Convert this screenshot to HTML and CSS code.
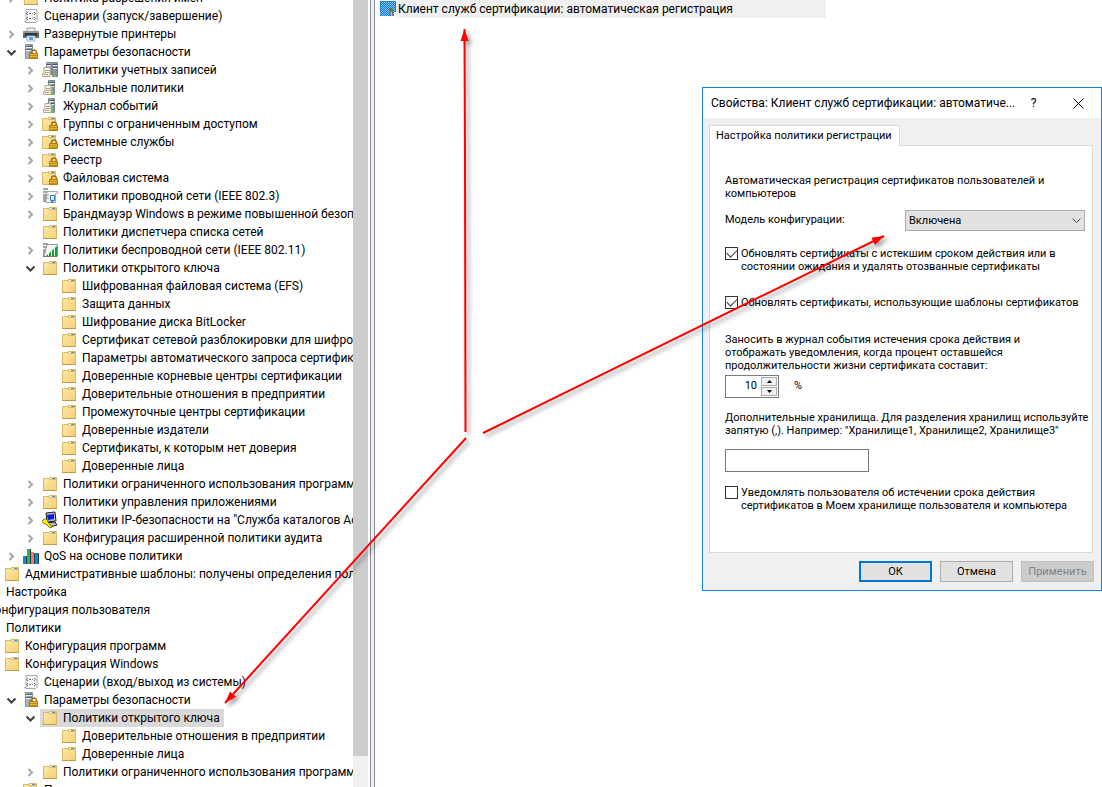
FILE: index.html
```
<!DOCTYPE html>
<html lang="ru">
<head>
<meta charset="utf-8">
<title>Редактор управления групповыми политиками</title>
<link rel="stylesheet" href="styles.css">
</head>
<body>
<svg class="sprite" aria-hidden="true">
  <defs>
    <linearGradient id="gold" x1="0" y1="0" x2="1" y2="1"><stop offset="0" stop-color="#ffe9a6"/><stop offset="1" stop-color="#f3cf74"/></linearGradient>
    <linearGradient id="steel" x1="0" y1="0" x2="1" y2="0"><stop offset="0" stop-color="#b9c6cf"/><stop offset="1" stop-color="#75868f"/></linearGradient>
    <pattern id="check" width="2" height="2" patternUnits="userSpaceOnUse"><path fill="#0078d7" d="M0 0h1v1H0zM1 1h1v1H1z"/></pattern>
    <marker id="head" viewBox="0 0 12 10" refX="12" refY="5" markerWidth="12" markerHeight="10" markerUnits="userSpaceOnUse" orient="auto"><path fill="#f00" d="M0 1l12 4-12 4z"/></marker>
  </defs>
  <symbol id="closed" viewBox="0 0 15 18"><path d="M5.500 6l3.500 3.500L5.500 13" fill="none" stroke="#a6a6a6" stroke-width="2"/></symbol>
  <symbol id="open" viewBox="0 0 15 18"><path d="M3.500 7.500L7.500 11.500l4-4" fill="none" stroke="#404040" stroke-width="2"/></symbol>
  <symbol id="folder" viewBox="0 0 18 18"><path d="M2.500 15.500v-12h5l1-1h7v13z" fill="url(#gold)" stroke="#dcb765"/><path d="M8.500 4.500v-2h6v2z" fill="#fff" stroke="#d9b763"/><path d="M11 3h3v1h-3z" fill="#3b9ae8"/><path d="M2 15h14v1H2z" fill="#c39a4a"/></symbol>
  <symbol id="lock" viewBox="0 0 18 18"><path d="M10.500 11V9.500a2.500 2.500 0 0 1 5 0V11" fill="none" stroke="#9c7414" stroke-width="1.500"/><path d="M8.500 10.500h8v5h-8z" fill="#e8b52c" stroke="#b08016"/><path d="M9 12.500h7M9 14.500h7" stroke="#c28d16"/></symbol>
  <symbol id="lockfolder" viewBox="0 0 18 18"><path d="M1.500 15.500v-12h5l1-1h7v13z" fill="url(#gold)" stroke="#dcb765"/><path d="M7.500 4.500v-2h6v2z" fill="#fff" stroke="#d9b763"/><path d="M10 3h3v1h-3z" fill="#3b9ae8"/><use href="#lock" x="0" y="0" width="18" height="18"/></symbol>
  <symbol id="script" viewBox="0 0 18 18"><path d="M4 2.500h11v12l-1 1H3.500l-1-1H4z" fill="#f7f7f7" stroke="#a9a9a9"/><path d="M6 5L4.500 6.500 6 8M12 5l1.500 1.500L12 8M6 10l-1.500 1.500L6 13M12 10l1.500 1.500L12 13" fill="none" stroke="#666"/><path d="M7 6.500h4M7 11.500h4" stroke="#777" stroke-dasharray="2 1"/></symbol>
  <symbol id="printer" viewBox="0 0 18 18"><path d="M5 3h8v5H5z" fill="#e9eef1" stroke="#9aa4aa"/><path d="M1 6h16v7H1z" fill="#606a70"/><path d="M1 6h16v2H1z" fill="#8e989e"/><path d="M3 8h12v3H3z" fill="#30363a"/><path d="M5 11h8v5H5z" fill="#f5fbff" stroke="#9eb3bf"/><path d="M7 12h4v3H7z" fill="#4aa5dc"/></symbol>
  <symbol id="security" viewBox="0 0 18 18"><path d="M3.500 1.500h7v14h-7z" fill="url(#steel)" stroke="#82919a"/><path d="M4 4.500h6M4 7.500h6" stroke="#f4f7f8"/><path d="M4 3.500h6M4 6.500h6" stroke="#4e626e"/><use href="#lock" x="-1" y="0" width="18" height="18"/></symbol>
  <symbol id="server" viewBox="0 0 18 18"><path d="M7.500 1.500h6v14h-6z" fill="url(#steel)" stroke="#788890"/><path d="M8 4.500h5M8 7.500h5" stroke="#edf2f4"/><path d="M8 3.500h5M8 6.500h5" stroke="#44545d"/><path d="M11 14h2v2h-2z" fill="#54d62c"/><path d="M4 6.500h6v9H2.500v-3H4z" fill="#faf4df" stroke="#b7a77e"/><path d="M5 9.500h4M5 11.500h4M4 13.500h4" stroke="#a5a5a0"/></symbol>
  <symbol id="servers" viewBox="0 0 18 18"><path d="M5.500 1.500h5v12h-5zM11.500 1.500h5v14h-5z" fill="url(#steel)" stroke="#788890"/><path d="M6 4.500h4M12 4.500h4M12 7.500h4" stroke="#edf2f4"/><path d="M6 3.500h4M12 3.500h4M12 6.500h4" stroke="#44545d"/><path d="M13 14h2v2h-2z" fill="#54d62c"/><path d="M3 6.500h6v9H1.500v-3H3z" fill="#faf4df" stroke="#b7a77e"/><path d="M4 9.500h4M4 11.500h4M3 13.500h4" stroke="#a5a5a0"/></symbol>
  <symbol id="wired" viewBox="0 0 18 18"><path d="M2 1h5v14H2z" fill="#98a7af"/><path d="M2 3.500h5M2 6.500h5" stroke="#fff"/><path d="M6 4.500h10.500v2h-2v9H5z" fill="#f7f8f8" stroke="#a0a8aa"/><path d="M4 8h4M4 11h4" stroke="#a99b7a"/><path d="M9.500 8.500h4v5h-4z" fill="#d5efff" stroke="#357cae"/><path d="M11.500 13v3" stroke="#357cae" stroke-width="2"/></symbol>
  <symbol id="wireless" viewBox="0 0 18 18"><path d="M2 2h5v13H2z" fill="#98a7af"/><path d="M2 4.500h5M2 7.500h5" stroke="#fff"/><path d="M6 3.500h10.500v12H3z" fill="#f7f8f8" stroke="#999"/><path d="M5 15h11V5z" fill="#169a35"/><path d="M7.500 5v10M10.500 5v10M13.500 5v10" stroke="#e9f6ec"/><path d="M2 15.500h14" stroke="#877a5c"/></symbol>
  <symbol id="ipsec" viewBox="0 0 18 18"><path d="M5 2l9-1 1 9-9 1zM5 12l9-1 2 3-7 2z" fill="#b9bcc0" stroke="#222"/><path d="M6 4l7-1v5l-6 1z" fill="#1019e8"/><path d="M2 9c2-2 5-1 5 2l4 5-2 1-4-4c-3 0-4-2-3-4z" fill="#fff000" stroke="#524f00" stroke-width=".8"/></symbol>
  <symbol id="qos" viewBox="0 0 18 18"><path d="M1 9h4v8H1z" fill="#1688d2"/><path d="M5 2h4v15H5z" fill="#3aaf4c"/><path d="M9 5h3v12H9z" fill="#ef7d62"/><path d="M13 6h4v11h-4z" fill="#1386cf"/><path d="M4.500 9v8M8.500 2v15M12.500 6v11M16.500 6v11" stroke="#1a4051"/></symbol>
  <symbol id="cert" viewBox="0 0 16 16"><path d="M0 0h16v11h-2v4H0z" fill="#8fc6f5"/><path d="M0 0h16v11H0zM0 11h9v4H0z" fill="url(#check)"/><path d="M.500 11V.500h15V11" fill="none" stroke="#2585cf"/><circle cx="11" cy="9" r="2" fill="#806e24"/><path d="M10 11v4M13 11v4" stroke="#173b59"/></symbol>
</svg>

<div class="console">
  <nav class="tree-pane" aria-label="Дерево консоли">
    <ul class="tree">
      <li><ul><li><ul><li><ul>
        <li><div class="node"><svg class="arrow"><use href="#closed"/></svg><svg class="icon"><use href="#folder"/></svg><span>Политика разрешения имен</span></div></li>
        <li><div class="node"><i class="arrow"></i><svg class="icon"><use href="#script"/></svg><span>Сценарии (запуск/завершение)</span></div></li>
        <li><div class="node"><svg class="arrow"><use href="#closed"/></svg><svg class="icon"><use href="#printer"/></svg><span>Развернутые принтеры</span></div></li>
        <li><div class="node"><svg class="arrow"><use href="#open"/></svg><svg class="icon"><use href="#security"/></svg><span>Параметры безопасности</span></div>
          <ul>
            <li><div class="node"><svg class="arrow"><use href="#closed"/></svg><svg class="icon"><use href="#servers"/></svg><span>Политики учетных записей</span></div></li>
            <li><div class="node"><svg class="arrow"><use href="#closed"/></svg><svg class="icon"><use href="#server"/></svg><span>Локальные политики</span></div></li>
            <li><div class="node"><svg class="arrow"><use href="#closed"/></svg><svg class="icon"><use href="#server"/></svg><span>Журнал событий</span></div></li>
            <li><div class="node"><svg class="arrow"><use href="#closed"/></svg><svg class="icon"><use href="#lockfolder"/></svg><span>Группы с ограниченным доступом</span></div></li>
            <li><div class="node"><svg class="arrow"><use href="#closed"/></svg><svg class="icon"><use href="#lockfolder"/></svg><span>Системные службы</span></div></li>
            <li><div class="node"><svg class="arrow"><use href="#closed"/></svg><svg class="icon"><use href="#lockfolder"/></svg><span>Реестр</span></div></li>
            <li><div class="node"><svg class="arrow"><use href="#closed"/></svg><svg class="icon"><use href="#lockfolder"/></svg><span>Файловая система</span></div></li>
            <li><div class="node"><svg class="arrow"><use href="#closed"/></svg><svg class="icon"><use href="#wired"/></svg><span>Политики проводной сети (IEEE 802.3)</span></div></li>
            <li><div class="node"><svg class="arrow"><use href="#closed"/></svg><svg class="icon"><use href="#folder"/></svg><span>Брандмауэр Windows в режиме повышенной безопасности</span></div></li>
            <li><div class="node"><i class="arrow"></i><svg class="icon"><use href="#folder"/></svg><span>Политики диспетчера списка сетей</span></div></li>
            <li><div class="node"><svg class="arrow"><use href="#closed"/></svg><svg class="icon"><use href="#wireless"/></svg><span>Политики беспроводной сети (IEEE 802.11)</span></div></li>
            <li><div class="node"><svg class="arrow"><use href="#open"/></svg><svg class="icon"><use href="#folder"/></svg><span>Политики открытого ключа</span></div>
              <ul>
                <li><div class="node"><i class="arrow"></i><svg class="icon"><use href="#folder"/></svg><span>Шифрованная файловая система (EFS)</span></div></li>
                <li><div class="node"><i class="arrow"></i><svg class="icon"><use href="#folder"/></svg><span>Защита данных</span></div></li>
                <li><div class="node"><i class="arrow"></i><svg class="icon"><use href="#folder"/></svg><span>Шифрование диска BitLocker</span></div></li>
                <li><div class="node"><i class="arrow"></i><svg class="icon"><use href="#folder"/></svg><span>Сертификат сетевой разблокировки для шифрования</span></div></li>
                <li><div class="node"><i class="arrow"></i><svg class="icon"><use href="#folder"/></svg><span>Параметры автоматического запроса сертификатов</span></div></li>
                <li><div class="node"><i class="arrow"></i><svg class="icon"><use href="#folder"/></svg><span>Доверенные корневые центры сертификации</span></div></li>
                <li><div class="node"><i class="arrow"></i><svg class="icon"><use href="#folder"/></svg><span>Доверительные отношения в предприятии</span></div></li>
                <li><div class="node"><i class="arrow"></i><svg class="icon"><use href="#folder"/></svg><span>Промежуточные центры сертификации</span></div></li>
                <li><div class="node"><i class="arrow"></i><svg class="icon"><use href="#folder"/></svg><span>Доверенные издатели</span></div></li>
                <li><div class="node"><i class="arrow"></i><svg class="icon"><use href="#folder"/></svg><span>Сертификаты, к которым нет доверия</span></div></li>
                <li><div class="node"><i class="arrow"></i><svg class="icon"><use href="#folder"/></svg><span>Доверенные лица</span></div></li>
              </ul></li>
            <li><div class="node"><svg class="arrow"><use href="#closed"/></svg><svg class="icon"><use href="#folder"/></svg><span>Политики ограниченного использования программ</span></div></li>
            <li><div class="node"><svg class="arrow"><use href="#closed"/></svg><svg class="icon"><use href="#folder"/></svg><span>Политики управления приложениями</span></div></li>
            <li><div class="node"><svg class="arrow"><use href="#closed"/></svg><svg class="icon"><use href="#ipsec"/></svg><span>Политики IP-безопасности на "Служба каталогов Active Directory"</span></div></li>
            <li><div class="node"><svg class="arrow"><use href="#closed"/></svg><svg class="icon"><use href="#folder"/></svg><span>Конфигурация расширенной политики аудита</span></div></li>
          </ul></li>
        <li><div class="node"><svg class="arrow"><use href="#closed"/></svg><svg class="icon"><use href="#qos"/></svg><span>QoS на основе политики</span></div></li>
        </ul></li>
        <li><div class="node"><i class="arrow"></i><svg class="icon"><use href="#folder"/></svg><span>Административные шаблоны: получены определения политик</span></div></li>
        </ul></li>
        <li><div class="node"><i class="arrow"></i><i class="icon"></i><span>Настройка</span></div></li>
      </ul></li>
      <li><div class="node"><i class="arrow"></i><i class="icon"></i><span>Конфигурация пользователя</span></div>
        <ul>
          <li><div class="node"><i class="arrow"></i><i class="icon"></i><span>Политики</span></div>
            <ul>
              <li><div class="node"><i class="arrow"></i><svg class="icon"><use href="#folder"/></svg><span>Конфигурация программ</span></div></li>
              <li><div class="node"><i class="arrow"></i><svg class="icon"><use href="#folder"/></svg><span>Конфигурация Windows</span></div>
                <ul>
                  <li><div class="node"><i class="arrow"></i><svg class="icon"><use href="#script"/></svg><span>Сценарии (вход/выход из системы)</span></div></li>
                  <li><div class="node"><svg class="arrow"><use href="#open"/></svg><svg class="icon"><use href="#security"/></svg><span>Параметры безопасности</span></div>
                    <ul>
                      <li><div class="node"><svg class="arrow"><use href="#open"/></svg><div class="selected"><svg class="icon"><use href="#folder"/></svg><span>Политики открытого ключа</span></div></div>
                        <ul>
                          <li><div class="node"><i class="arrow"></i><svg class="icon"><use href="#folder"/></svg><span>Доверительные отношения в предприятии</span></div></li>
                          <li><div class="node"><i class="arrow"></i><svg class="icon"><use href="#folder"/></svg><span>Доверенные лица</span></div></li>
                        </ul></li>
                      <li><div class="node"><svg class="arrow"><use href="#closed"/></svg><svg class="icon"><use href="#folder"/></svg><span>Политики ограниченного использования программ</span></div></li>
                    </ul></li>
                  <li><div class="node"><i class="arrow"></i><svg class="icon"><use href="#lockfolder"/></svg><span>Перенаправление папки</span></div></li>
                </ul></li>
            </ul></li>
        </ul></li>
    </ul>
  </nav>
  <div class="scrollbar"><div class="thumb"></div></div>
  <div class="splitter"></div>
  <main class="details">
    <div class="entry"><svg class="cert"><use href="#cert"/></svg><span>Клиент служб сертификации: автоматическая регистрация</span></div>
  </main>
</div>

<section class="dialog" role="dialog" aria-labelledby="dialog-title">
  <header class="titlebar">
    <h1 id="dialog-title">Свойства: Клиент служб сертификации: автоматиче...</h1>
    <button class="caption" type="button" aria-label="Справка">?</button>
    <button class="caption" type="button" aria-label="Закрыть"><svg width="11" height="11" viewBox="0 0 11 11"><path d="M.500.500l10 10M10.500.500l-10 10" stroke="#000"/></svg></button>
  </header>
  <form class="body">
    <button class="tab" type="button">Настройка политики регистрации</button>
    <div class="sheet">
      <p>Автоматическая регистрация сертификатов пользователей и<br>компьютеров</p>
      <div class="model">
        <label for="model">Модель конфигурации:</label>
        <div class="combo"><select id="model"><option>Включена</option></select><svg width="9" height="6" viewBox="0 0 9 6"><path d="M.500.500l4 4 4-4" fill="none" stroke="#444"/></svg></div>
      </div>
      <div class="option"><input id="renew" type="checkbox" checked><label for="renew">Обновлять сертификаты с истекшим сроком действия или в<br>состоянии ожидания и удалять отозванные сертификаты</label></div>
      <div class="option templates"><input id="templates" type="checkbox" checked><label for="templates">Обновлять сертификаты, использующие шаблоны сертификатов</label></div>
      <label class="block" for="percent">Заносить в журнал события истечения срока действия и<br>отображать уведомления, когда процент оставшейся<br>продолжительности жизни сертификата составит:</label>
      <div class="percent">
        <div class="spin"><input id="percent" type="text" value="10"><div class="steps"><button type="button" aria-label="Больше"><svg width="5" height="3"><path d="M0 3h5L2.500 0z"/></svg></button><button type="button" aria-label="Меньше"><svg width="5" height="3"><path d="M0 0h5L2.500 3z"/></svg></button></div></div>
        <span>%</span>
      </div>
      <label class="block" for="stores">Дополнительные хранилища. Для разделения хранилищ используйте<br>запятую (,). Например: "Хранилище1, Хранилище2, Хранилище3"</label>
      <input class="stores" id="stores" type="text">
      <div class="option"><input id="notify" type="checkbox"><label for="notify">Уведомлять пользователя об истечении срока действия<br>сертификатов в Моем хранилище пользователя и компьютера</label></div>
    </div>
    <footer class="actions">
      <button class="default" type="button">ОК</button>
      <button type="button">Отмена</button>
      <button type="button" disabled>Применить</button>
    </footer>
  </form>
</section>

<svg class="callouts" width="1102" height="787" aria-hidden="true">
  <g fill="none" stroke="#f00" stroke-width="2">
    <path d="M465.500 432L465 160 464.500 29" marker-end="url(#head)"/>
    <path d="M483 433L884 236" marker-end="url(#head)"/>
    <path d="M466 438L225 703" marker-end="url(#head)"/>
  </g>
</svg>
</body>
</html>
```

FILE: styles.css
```
* { box-sizing: border-box; }

body {
  margin: 0;
  height: 100vh;
  overflow: hidden;
  position: relative;
  background: #fff;
  color: #000;
  font: 12px/18px Roboto, "Noto Sans", sans-serif;
}

button, input, select { font: inherit; color: inherit; margin: 0; padding: 0; }
.sprite { position: absolute; width: 0; height: 0; }

.console { display: flex; height: 100%; }

/* Console tree */
.tree-pane { flex: 0 0 353px; overflow: hidden; }
.tree { margin: -11px 0 0 -53px; }
.tree, .tree ul { list-style: none; padding: 0; }
.tree ul { margin: 0 0 0 19px; }
.node { display: flex; height: 18px; white-space: nowrap; }
.arrow { flex: none; width: 15px; height: 18px; margin-right: 3px; }
.icon { flex: none; width: 18px; height: 18px; margin-right: 4px; }
.selected { display: flex; margin-left: -1px; padding: 0 4px 0 1px; background: #d9d9d9; }

.scrollbar { flex: 0 0 15px; margin-right: 2px; background: #f0f0f0; }
.thumb { height: 96%; background: #cdcdcd; }
.splitter { flex: 0 0 5px; background: #f0f0f0; border: solid #828790; border-width: 0 1px; }

/* Result list */
.details { flex: 1; padding-left: 5px; }
.entry { display: flex; width: 446px; white-space: nowrap; }
.cert { flex: none; width: 16px; height: 16px; margin-top: 1px; }
.entry span { flex: 1; padding-left: 2px; background: #f0f0f0; }

/* Properties dialog */
.dialog {
  position: absolute;
  top: 87px;
  right: 0;
  width: 400px;
  border: 1px solid #1883d7;
  background: #f0f0f0;
}
.titlebar { display: flex; height: 30px; align-items: center; padding-left: 8px; background: #fff; }
.titlebar h1 { flex: 1; min-width: 0; margin: 0; font-size: 12px; font-weight: 400; white-space: nowrap; }
.caption { flex: none; display: flex; align-items: center; justify-content: center; width: 45px; height: 30px; border: 0; background: none; }

.body { padding: 7px 7px 8px 6px; font: 11px/13px Roboto, "Noto Sans", sans-serif; }
.tab {
  display: block;
  position: relative;
  height: 21px;
  margin-bottom: -1px;
  padding: 0 7px 2px 6px;
  border: 1px solid #d9d9d9;
  border-bottom: 0;
  background: #fff;
  white-space: nowrap;
}
.sheet {
  display: flex;
  flex-direction: column;
  height: 408px;
  margin-right: 1px;
  padding: 28px 7px 0 15px;
  border: 1px solid #d9d9d9;
  background: #fff;
  white-space: nowrap;
}
.sheet p { margin: 0; }
.model { display: flex; justify-content: space-between; margin: 10px 0 16px; }
.model label { padding-top: 3px; }
.combo { position: relative; width: 180px; }
.combo select { display: block; appearance: none; width: 100%; height: 21px; padding: 0 3px; border: 1px solid #adadad; border-radius: 0; background: #e1e1e1; }
.combo svg { position: absolute; top: 8px; right: 4px; pointer-events: none; }

.option { display: flex; gap: 3px; }
.option input { flex: none; appearance: none; width: 13px; height: 13px; border: 1px solid #333; background: #fff; }
.option input:checked::after {
  content: "";
  display: block;
  width: 9px;
  height: 5px;
  margin: 2px 1px;
  border: solid #333;
  border-width: 0 0 1px 1px;
  transform: translateY(-1px) rotate(-45deg);
}
.templates { margin: 23px 0 24px; }
.percent { display: flex; gap: 15px; margin: 3px 0 13px; }
.percent span { padding-top: 4px; }
.spin { display: flex; width: 54px; height: 23px; border: 1px solid #7a7a7a; }
.spin input { flex: 1; min-width: 0; padding: 0 4px 2px 0; border: 0; text-align: right; }
.steps { display: flex; flex-direction: column; width: 17px; gap: 1px; padding: 1px 1px 1px 0; }
.steps button { flex: 1; display: flex; align-items: center; justify-content: center; border: 1px solid #adadad; background: #f0f0f0; }
.stores { width: 144px; height: 23px; margin: 12px 0 14px; padding: 0 3px; border: 1px solid #7a7a7a; }

.actions { display: flex; justify-content: flex-end; gap: 8px; padding-top: 8px; }
.actions button { width: 73px; height: 21px; border: 1px solid #adadad; background: #e1e1e1; }
.actions .default { border: 2px solid #0078d7; }
.actions button:disabled { border-color: #bfbfbf; background: #ccc; color: #838383; }

.callouts { position: absolute; top: 0; left: 0; pointer-events: none; filter: drop-shadow(3px 3px 2px rgba(0, 0, 0, .4)); }
```
